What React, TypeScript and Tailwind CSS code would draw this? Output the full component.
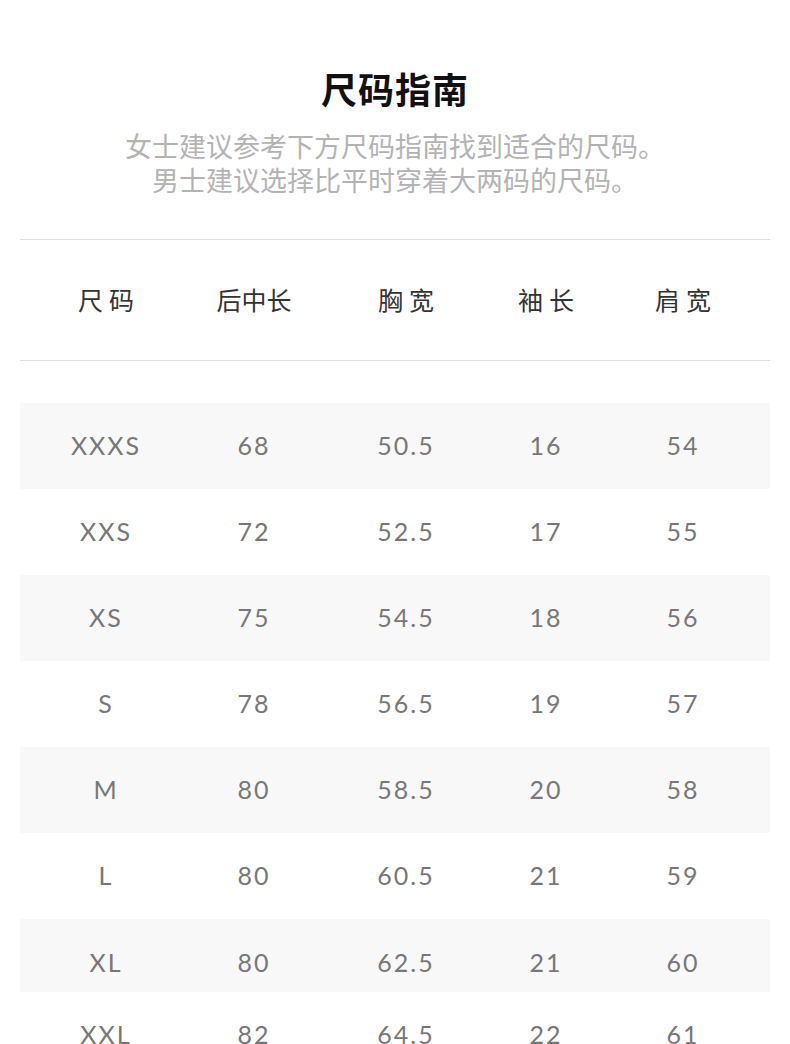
import React from "react";

// Size chart rows
interface SizeRow {
  size: string;
  length: string;
  chest: string;
  sleeve: string;
  shoulder: string;
}

const rows: SizeRow[] = [
  { size: "XXXS", length: "68", chest: "50.5", sleeve: "16", shoulder: "54" },
  { size: "XXS", length: "72", chest: "52.5", sleeve: "17", shoulder: "55" },
  { size: "XS", length: "75", chest: "54.5", sleeve: "18", shoulder: "56" },
  { size: "S", length: "78", chest: "56.5", sleeve: "19", shoulder: "57" },
  { size: "M", length: "80", chest: "58.5", sleeve: "20", shoulder: "58" },
  { size: "L", length: "80", chest: "60.5", sleeve: "21", shoulder: "59" },
  { size: "XL", length: "80", chest: "62.5", sleeve: "21", shoulder: "60" },
  { size: "XXL", length: "82", chest: "64.5", sleeve: "22", shoulder: "61" },
];

const cols = "grid grid-cols-[172px_124px_180px_100px_174px]";
const cjk = "font-['Noto_Sans_CJK_SC',sans-serif]";

const Head = ({ chars }: { chars: string[] }) => (
  <div className="flex justify-center gap-[6px]">
    {chars.map((c, i) => (
      <span key={i}>{c}</span>
    ))}
  </div>
);

const App = () => {
  return (
    <div className={`w-[790px] min-h-[1044px] bg-white ${cjk}`}>
      {/* Title */}
      <div className="pt-[65px] flex flex-col items-center">
        <h1 className="text-[36px] leading-[46px] font-bold text-[#111] tracking-[1px]">
          尺码指南
        </h1>
        <div className="mt-[18px] flex flex-col items-center text-[27px] leading-[34px] text-[#b3b3b3]">
          <p>女士建议参考下方尺码指南找到适合的尺码。</p>
          <p>男士建议选择比平时穿着大两码的尺码。</p>
        </div>
      </div>

      {/* Table header */}
      <div className="mx-[20px] mt-[42px] border-t border-b border-[#dedede]">
        <div className={`${cols} h-[120px] items-center text-[25px] text-[#333]`}>
          <Head chars={["尺", "码"]} />
          <Head chars={["后中长"]} />
          <Head chars={["胸", "宽"]} />
          <Head chars={["袖", "长"]} />
          <Head chars={["肩", "宽"]} />
        </div>
      </div>

      {/* Table rows */}
      <div className="mx-[20px] mt-[42px] text-[25px] text-[#777] font-['Lato','Noto_Sans',sans-serif] font-normal tracking-[2px]">
        {rows.map((r, i) => (
          <div
            key={r.size}
            className={`${cols} items-center text-center ${
              i % 2 === 0 ? "bg-[#f8f8f8]" : "bg-white"
            } ${r.size === "XL" ? "h-[73px] pt-[14px]" : "h-[86px]"}`}
          >
            <div>{r.size}</div>
            <div>{r.length}</div>
            <div>{r.chest}</div>
            <div>{r.sleeve}</div>
            <div>{r.shoulder}</div>
          </div>
        ))}
      </div>
    </div>
  );
};

export default App;
